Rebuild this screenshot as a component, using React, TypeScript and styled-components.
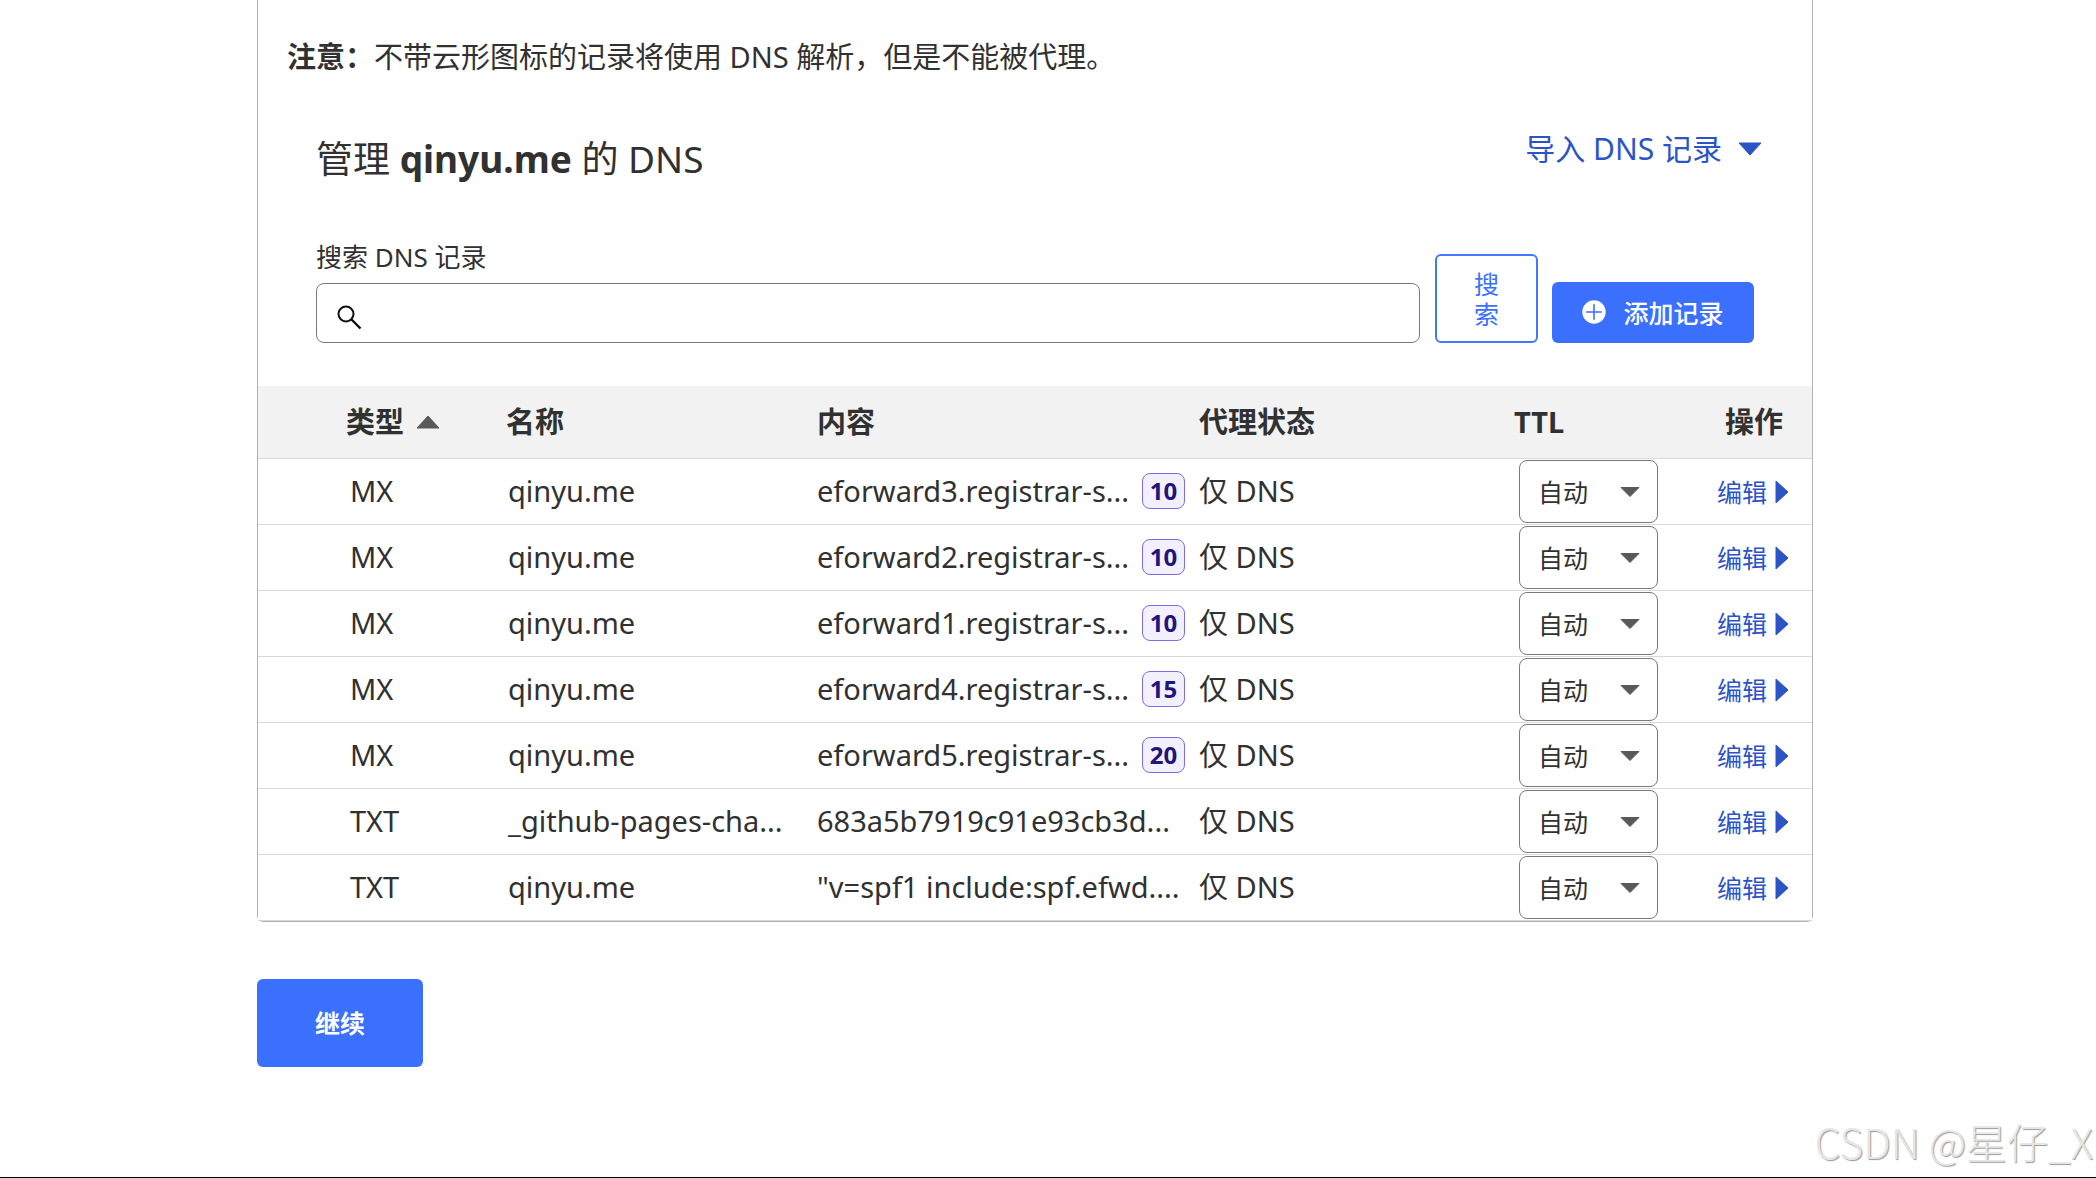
import React from "react";
import styled, { createGlobalStyle } from "styled-components";

const GlobalStyle = createGlobalStyle`
  *, *::before, *::after { box-sizing: border-box; }
  body { margin: 0; background: #fff; }
  body, button, input, select {
    font-family: "Noto Sans", "Noto Sans CJK SC", sans-serif;
    color: #313131;
  }
`;

const Page = styled.div`
  position: relative;
  min-height: 100vh;
  padding: 0 283px 0 257px;
  border-bottom: 1px solid #000;
`;

const Card = styled.section`
  border: 1px solid #b2b2b2;
  border-top: 0;
  border-radius: 0 0 6px 6px;
`;

const Notice = styled.p`
  margin: 0;
  padding: 36px 29px 0;
  font-size: 29px;
  line-height: 42px;
`;

const Panel = styled.div`
  padding: 55px 58px 43px;
`;

const TitleBar = styled.div`
  display: flex;
  justify-content: space-between;
  align-items: flex-start;
`;

const Title = styled.h2`
  margin: 0;
  font-size: 37px;
  font-weight: 400;
  line-height: 52px;
`;

const ImportButton = styled.button`
  display: flex;
  align-items: center;
  gap: 16px;
  padding: 0;
  margin-right: -8px;
  border: 0;
  background: none;
  color: #2c54c6;
  font-size: 30px;
  line-height: 32px;
`;

const SearchForm = styled.form`
  display: flex;
  align-items: flex-end;
  margin-top: 53px;
`;

const Field = styled.div`
  flex: 1;
  display: flex;
  flex-direction: column;
  gap: 7px;
`;

const FieldLabel = styled.label`
  font-size: 26px;
  line-height: 38px;
`;

const SearchBox = styled.div`
  display: flex;
  align-items: center;
  height: 60px;
  padding: 8px 20px 0;
  border: 1px solid #797979;
  border-radius: 8px;
`;

const SearchInput = styled.input`
  flex: 1;
  margin-left: 12px;
  border: 0;
  outline: 0;
  background: none;
  font-size: 25px;
`;

const SearchButton = styled.button`
  width: 103px;
  height: 89px;
  margin: 0 14px 0 15px;
  padding: 0 36px;
  border: 2px solid #4178ff;
  border-radius: 6px;
  background: #fff;
  color: #3b70ff;
  font-size: 25px;
  line-height: 30px;
`;

const PrimaryButton = styled.button<{ $large?: boolean }>`
  display: flex;
  align-items: center;
  justify-content: center;
  gap: 17px;
  width: ${(p) => (p.$large ? 166 : 202)}px;
  height: ${(p) => (p.$large ? 88 : 61)}px;
  padding: 0 0 2px;
  border: 0;
  border-radius: 6px;
  background: #3b70ff;
  color: #fff;
  font-size: 25px;
  font-weight: ${(p) => (p.$large ? 700 : 500)};
`;

const Table = styled.table`
  width: 100%;
  table-layout: fixed;
  border-collapse: collapse;
  font-size: 29px;
  white-space: nowrap;
`;

const Col = styled.col<{ $width?: number }>`
  width: ${(p) => (p.$width ? `${p.$width}px` : "auto")};
`;

const HeadCell = styled.th<{ $first?: boolean; $end?: boolean }>`
  height: 72px;
  padding: 0 ${(p) => (p.$end ? 29 : 0)}px 0 ${(p) => (p.$first ? 88 : 0)}px;
  border-bottom: 1px solid #d9d9d9;
  background: #f2f2f2;
  font-weight: 700;
  line-height: 40px;
  text-align: ${(p) => (p.$end ? "right" : "left")};
`;

const SortLabel = styled.span`
  display: flex;
  align-items: center;
  gap: 12px;
`;

const Cell = styled.td<{ $first?: boolean; $inset?: number }>`
  height: 66px;
  padding: 0 0 0 ${(p) => (p.$first ? 92 : p.$inset || 0)}px;
  border-bottom: 1px solid #d9d9d9;
  background: #fff;
  line-height: 40px;
`;

const ActionCell = styled(Cell)`
  padding-top: 2px;
  padding-right: 23px;
`;

const ContentLine = styled.div`
  display: flex;
  align-items: center;
  justify-content: space-between;
  padding-right: 14px;
`;

const Priority = styled.span`
  width: 43px;
  height: 36px;
  border: 1px solid #7f6be8;
  border-radius: 8px;
  background: #f2f0fc;
  color: #23137f;
  font-size: 24px;
  font-weight: 700;
  line-height: 34px;
  text-align: center;
`;

const SelectWrap = styled.div`
  display: grid;
  align-items: center;
  width: 139px;

  > * {
    grid-area: 1 / 1;
  }

  > svg {
    justify-self: end;
    margin: 2px 18px 0 0;
    pointer-events: none;
  }
`;

const TtlSelect = styled.select`
  width: 100%;
  height: 63px;
  padding: 2px 18px 0;
  border: 1px solid #797979;
  border-radius: 8px;
  appearance: none;
  background: #fff;
  font-size: 25px;
`;

const EditLink = styled.a`
  display: flex;
  align-items: center;
  justify-content: flex-end;
  gap: 8px;
  color: #2c54c6;
  font-size: 25px;
  text-decoration: none;
`;

const Footer = styled.div`
  margin-top: 57px;
`;

const Watermark = styled.div`
  position: absolute;
  right: 3px;
  bottom: 8px;
  color: #e6e6e6;
  font-family: "Noto Sans CJK SC", sans-serif;
  font-size: 41px;
  font-weight: 300;
  line-height: 56px;
  text-shadow: 1px 1px 1px #999;
`;

const Triangle = ({ points, width, height, color }: { points: string; width: number; height: number; color: string }) => (
  <svg width={width} height={height} viewBox={`0 0 ${width} ${height}`} aria-hidden="true">
    <polygon points={points} fill={color} stroke={color} strokeWidth="1" strokeLinejoin="round" />
  </svg>
);

const SearchIcon = () => (
  <svg width="25" height="25" viewBox="0 0 25 25" fill="none" stroke="#111" strokeWidth="2" aria-hidden="true">
    <circle cx="9" cy="9" r="7.5" />
    <path d="M14.5 14.5L23.5 23.5" strokeWidth="2.4" />
  </svg>
);

const PlusIcon = () => (
  <svg width="24" height="24" viewBox="0 0 24 24" aria-hidden="true">
    <circle cx="12" cy="12" r="11.7" fill="#fff" />
    <path d="M12 4.2V19.8M4.2 12H19.8" stroke="#3b70ff" strokeWidth="1.6" />
  </svg>
);

type DnsRecord = { type: string; name: string; content: string; priority?: number };

const records: DnsRecord[] = [
  { type: "MX", name: "qinyu.me", content: "eforward3.registrar-s...", priority: 10 },
  { type: "MX", name: "qinyu.me", content: "eforward2.registrar-s...", priority: 10 },
  { type: "MX", name: "qinyu.me", content: "eforward1.registrar-s...", priority: 10 },
  { type: "MX", name: "qinyu.me", content: "eforward4.registrar-s...", priority: 15 },
  { type: "MX", name: "qinyu.me", content: "eforward5.registrar-s...", priority: 20 },
  { type: "TXT", name: "_github-pages-cha...", content: "683a5b7919c91e93cb3d..." },
  { type: "TXT", name: "qinyu.me", content: '"v=spf1 include:spf.efwd....' },
];

const RecordRow = ({ record }: { record: DnsRecord }) => (
  <tr>
    <Cell $first>{record.type}</Cell>
    <Cell $inset={2}>{record.name}</Cell>
    <Cell>
      <ContentLine>
        <span>{record.content}</span>
        {record.priority && <Priority>{record.priority}</Priority>}
      </ContentLine>
    </Cell>
    <Cell>仅 DNS</Cell>
    <Cell $inset={5}>
      <SelectWrap>
        <TtlSelect aria-label="TTL" defaultValue="auto">
          <option value="auto">自动</option>
        </TtlSelect>
        <Triangle width={20} height={10} points="1,0.5 19,0.5 10,9.5" color="#595959" />
      </SelectWrap>
    </Cell>
    <ActionCell>
      <EditLink href="#edit">
        编辑
        <Triangle width={14} height={24} points="1,1 13,12 1,23" color="#2c54c6" />
      </EditLink>
    </ActionCell>
  </tr>
);

export default function App() {
  return (
    <Page>
      <GlobalStyle />
      <Card>
        <Notice>
          <strong>注意：</strong>不带云形图标的记录将使用 DNS 解析，但是不能被代理。
        </Notice>
        <Panel>
          <TitleBar>
            <Title>
              管理 <strong>qinyu.me</strong> 的 DNS
            </Title>
            <ImportButton type="button">
              导入 DNS 记录
              <Triangle width={24} height={14} points="1,1 23,1 12,13" color="#2c54c6" />
            </ImportButton>
          </TitleBar>
          <SearchForm onSubmit={(e) => e.preventDefault()}>
            <Field>
              <FieldLabel htmlFor="dns-search">搜索 DNS 记录</FieldLabel>
              <SearchBox>
                <SearchIcon />
                <SearchInput id="dns-search" type="text" />
              </SearchBox>
            </Field>
            <SearchButton type="submit">搜索</SearchButton>
            <PrimaryButton type="button">
              <PlusIcon />
              添加记录
            </PrimaryButton>
          </SearchForm>
        </Panel>
        <Table>
          <colgroup>
            <Col $width={248} />
            <Col $width={311} />
            <Col $width={382} />
            <Col />
            <Col $width={160} />
            <Col $width={138} />
          </colgroup>
          <thead>
            <tr>
              <HeadCell $first>
                <SortLabel>
                  类型
                  <Triangle width={24} height={14} points="12,1 23,13 1,13" color="#595959" />
                </SortLabel>
              </HeadCell>
              <HeadCell>名称</HeadCell>
              <HeadCell>内容</HeadCell>
              <HeadCell>代理状态</HeadCell>
              <HeadCell>TTL</HeadCell>
              <HeadCell $end>操作</HeadCell>
            </tr>
          </thead>
          <tbody>
            {records.map((record) => (
              <RecordRow key={record.content} record={record} />
            ))}
          </tbody>
        </Table>
      </Card>
      <Footer>
        <PrimaryButton type="button" $large>
          继续
        </PrimaryButton>
      </Footer>
      <Watermark>CSDN @星仔_X</Watermark>
    </Page>
  );
}
